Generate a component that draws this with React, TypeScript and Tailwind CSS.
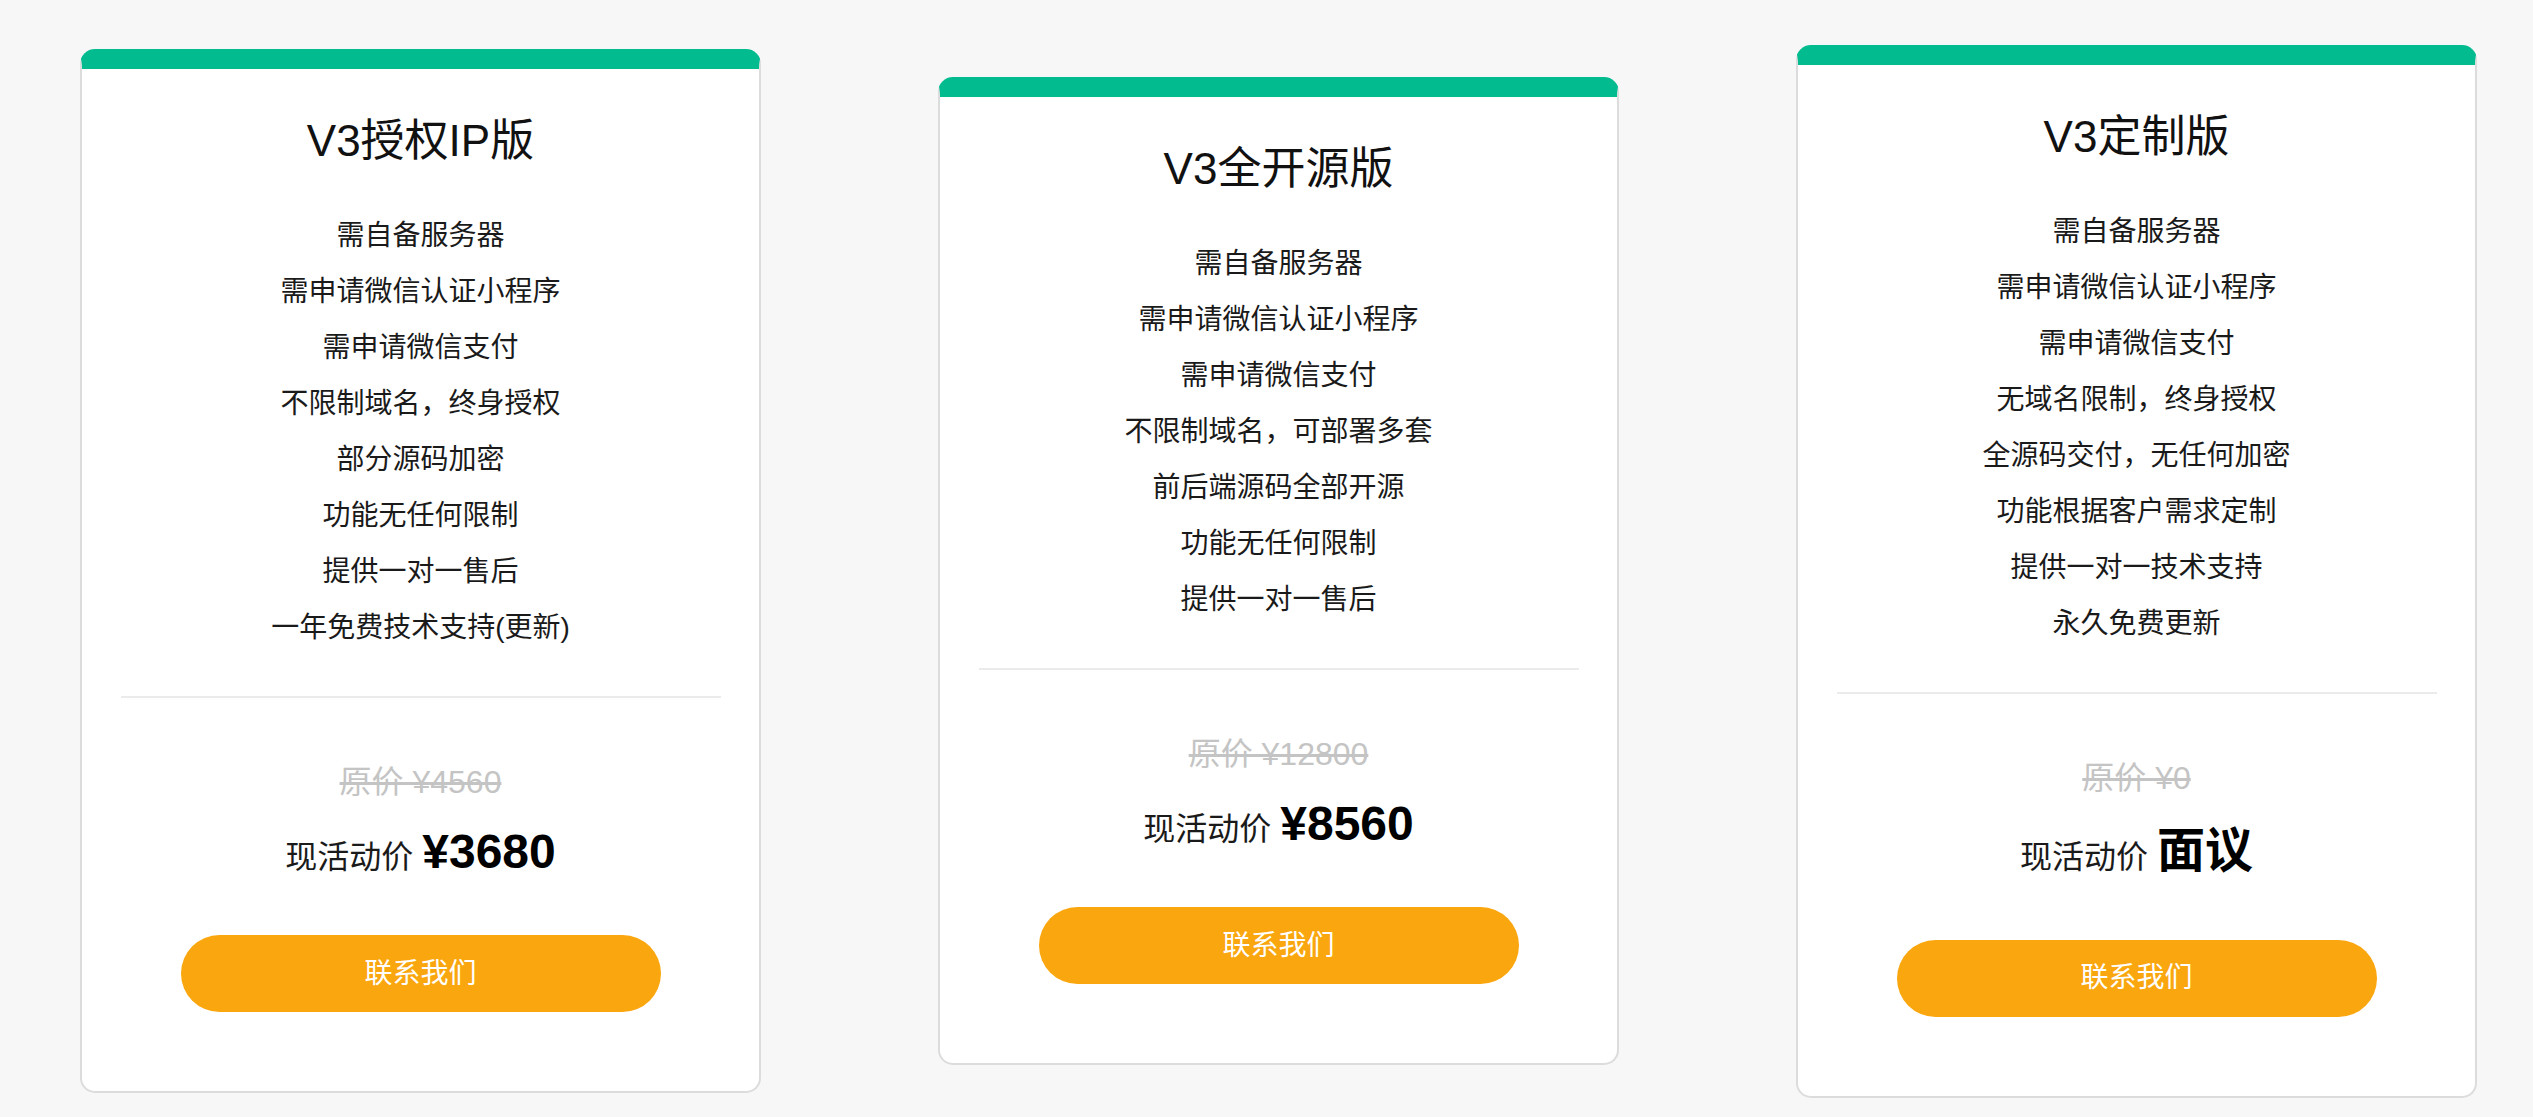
import React from "react";

type Plan = {
  title: string;
  features: string[];
  orig: string;
  now: string;
  nowIsText?: boolean;
};

const plans: Plan[] = [
  {
    title: "V3授权IP版",
    features: [
      "需自备服务器",
      "需申请微信认证小程序",
      "需申请微信支付",
      "不限制域名，终身授权",
      "部分源码加密",
      "功能无任何限制",
      "提供一对一售后",
      "一年免费技术支持(更新)",
    ],
    orig: "原价 ¥4560",
    now: "¥3680",
  },
  {
    title: "V3全开源版",
    features: [
      "需自备服务器",
      "需申请微信认证小程序",
      "需申请微信支付",
      "不限制域名，可部署多套",
      "前后端源码全部开源",
      "功能无任何限制",
      "提供一对一售后",
    ],
    orig: "原价 ¥12800",
    now: "¥8560",
  },
  {
    title: "V3定制版",
    features: [
      "需自备服务器",
      "需申请微信认证小程序",
      "需申请微信支付",
      "无域名限制，终身授权",
      "全源码交付，无任何加密",
      "功能根据客户需求定制",
      "提供一对一技术支持",
      "永久免费更新",
    ],
    orig: "原价 ¥0",
    now: "面议",
    nowIsText: true,
  },
];

const FONT = '"Liberation Sans", "Noto Sans CJK SC", Arial, sans-serif';

function Card({ plan }: { plan: Plan }) {
  return (
    <div className="w-[681px] shrink-0 bg-white rounded-[15px] border-2 border-[#dcdcdc] border-t-[20px] border-t-[#02bb8f] flex flex-col items-center pt-[42px] pb-[79px]">
      <div className="text-[44px] leading-[60px] text-[#111]">{plan.title}</div>
      <div className="mt-[37px] flex flex-col items-center">
        {plan.features.map((f) => (
          <div key={f} className="text-[28px] leading-[56px] text-[#1a1a1a]">
            {f}
          </div>
        ))}
      </div>
      <div className="mt-[40px] h-[2px] w-[600px] bg-[#ebebeb]" />
      <div className="mt-[60px] text-[32px] leading-[48px] text-[#c4c4c4] line-through decoration-[#c4c4c4] decoration-[3px]">
        {plan.orig}
      </div>
      {plan.nowIsText ? (
        <div className="mt-[16px] h-[67px] flex items-center justify-center text-[#1a1a1a]">
          <span className="text-[32px] leading-[40px] mt-[12px]">现活动价</span>
          <span className="ml-[9px] text-[48px] leading-[60px] font-bold text-black">{plan.now}</span>
        </div>
      ) : (
        <div className="mt-[18px] h-[56px] flex items-baseline justify-center text-[#1a1a1a]">
          <span className="text-[32px] leading-[56px]">现活动价</span>
          <span className="ml-[9px] text-[48px] leading-[56px] font-bold text-black">{plan.now}</span>
        </div>
      )}
      <button className="mt-[55px] w-[480px] h-[77px] rounded-full bg-[#faa60e] text-white text-[28px]">
        联系我们
      </button>
    </div>
  );
}

export default function App() {
  return (
    <div
      className="w-full h-[1117px] overflow-hidden bg-[#f7f7f7] flex items-center pl-[80px] pt-[25px] gap-[177px]"
      style={{ fontFamily: FONT }}
    >
      {plans.map((p) => (
        <Card key={p.title} plan={p} />
      ))}
    </div>
  );
}
